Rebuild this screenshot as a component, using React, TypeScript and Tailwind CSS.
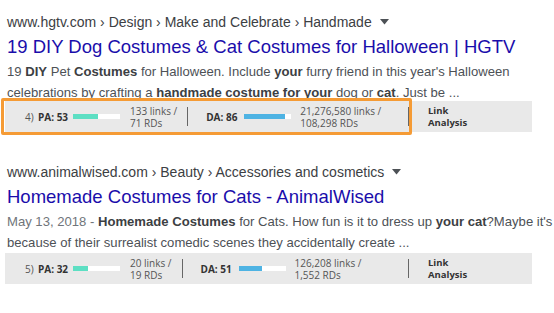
import React from "react";

type Metrics = {
  rank: string;
  pa: number;
  paLinks: string;
  paRds: string;
  da: number;
  daLinks: string;
  daRds: string;
};

type Result = {
  crumbs: string;
  title: string;
  lines: React.ReactNode[];
  metrics: Metrics;
  highlight?: boolean;
};

const B = ({ children }: { children: React.ReactNode }) => <b className="text-[#3c4043]">{children}</b>;

const results: Result[] = [
  {
    crumbs: "www.hgtv.com › Design › Make and Celebrate › Handmade",
    title: "19 DIY Dog Costumes & Cat Costumes for Halloween | HGTV",
    lines: [
      <>
        19 <B>DIY</B> Pet <B>Costumes</B> for Halloween. Include <B>your</B> furry friend in this year's Halloween
      </>,
      <>
        celebrations by crafting a <B>handmade costume for your</B> dog or <B>cat</B>. Just be ...
      </>,
    ],
    metrics: {
      rank: "4)",
      pa: 53,
      paLinks: "133 links /",
      paRds: "71 RDs",
      da: 86,
      daLinks: "21,276,580 links /",
      daRds: "108,298 RDs",
    },
    highlight: true,
  },
  {
    crumbs: "www.animalwised.com › Beauty › Accessories and cosmetics",
    title: "Homemade Costumes for Cats - AnimalWised",
    lines: [
      <>
        <span className="text-[#70757a]">May 13, 2018 - </span>
        <B>Homemade Costumes</B> for Cats. How fun is it to dress up <B>your cat</B>?Maybe it's
      </>,
      <>because of their surrealist comedic scenes they accidentally create ...</>,
    ],
    metrics: {
      rank: "5)",
      pa: 32,
      paLinks: "20 links /",
      paRds: "19 RDs",
      da: 51,
      daLinks: "126,208 links /",
      daRds: "1,552 RDs",
    },
  },
];

function Meter({ value, color }: { value: number; color: string }) {
  return (
    <div className="w-[47px] h-[5px] bg-white shrink-0">
      <div className={`h-full ${color}`} style={{ width: `${value}%` }} />
    </div>
  );
}

function MozBar({ m, highlight }: { m: Metrics; highlight?: boolean }) {
  return (
    <div className="relative ml-[-2px] w-[527px]">
      <div className="h-[31px] bg-[#e9e9e9] flex items-center text-[10px] leading-[12px] text-[#555] font-['Open_Sans',sans-serif]">
        <div className="w-[404px] h-full flex items-center pl-[20px]">
          <span className="w-[13px]">{m.rank}</span>
          <span className="w-[35px] font-bold text-[#333]">PA: {m.pa}</span>
          <Meter value={m.pa} color="bg-[#5ddfc3]" />
          <div className="ml-[10px] flex flex-col whitespace-nowrap">
            <span>{m.paLinks}</span>
            <span>{m.paRds}</span>
          </div>
          <div className="ml-[10px] mr-[18px] w-px h-[19px] bg-[#666]" />
          <span className="w-[38px] font-bold text-[#333]">DA: {m.da}</span>
          <Meter value={m.da} color="bg-[#4eb3e3]" />
          <div className="ml-[9px] flex flex-col whitespace-nowrap">
            <span>{m.daLinks}</span>
            <span>{m.daRds}</span>
          </div>
          <div className="ml-auto w-px h-[19px] bg-[#666]" />
        </div>
        <div className="pl-[19px] flex flex-col font-bold text-[9.5px] text-[#333]">
          <span>Link</span>
          <span>Analysis</span>
        </div>
      </div>
      {highlight && (
        <div className="absolute left-[-4px] top-[-3px] w-[411px] h-[37px] border-[3px] border-[#f59b35] rounded-[2px]" />
      )}
    </div>
  );
}

export default function App() {
  return (
    <div className="w-[554px] h-[313px] bg-white overflow-hidden font-['Liberation_Sans',Arial,sans-serif] pl-[7px]">
      {results.map((r, i) => (
        <div key={i} className={i === 0 ? "pt-[12px]" : "pt-[30px]"}>
          <div className="flex items-center h-[20px] text-[14px] text-[#3c4043] whitespace-nowrap">
            <span>{r.crumbs}</span>
            <svg className="ml-[8px]" width="9" height="6" viewBox="0 0 9 6">
              <path d="M0 0 L9 0 L4.5 5.5 Z" fill="#4d5156" />
            </svg>
          </div>
          <div className="mt-[2px] h-[26px] leading-[26px] text-[18.5px] text-[#1a0dab] whitespace-nowrap">{r.title}</div>
          <div className="mt-[1px] text-[13.1px] leading-[21px] text-[#4d5156] whitespace-nowrap">
            {r.lines.map((l, j) => (
              <div key={j}>{l}</div>
            ))}
          </div>
          <div className={i === 0 ? "mt-[-2px]" : "mt-0"}>
            <MozBar m={r.metrics} highlight={r.highlight} />
          </div>
        </div>
      ))}
    </div>
  );
}
